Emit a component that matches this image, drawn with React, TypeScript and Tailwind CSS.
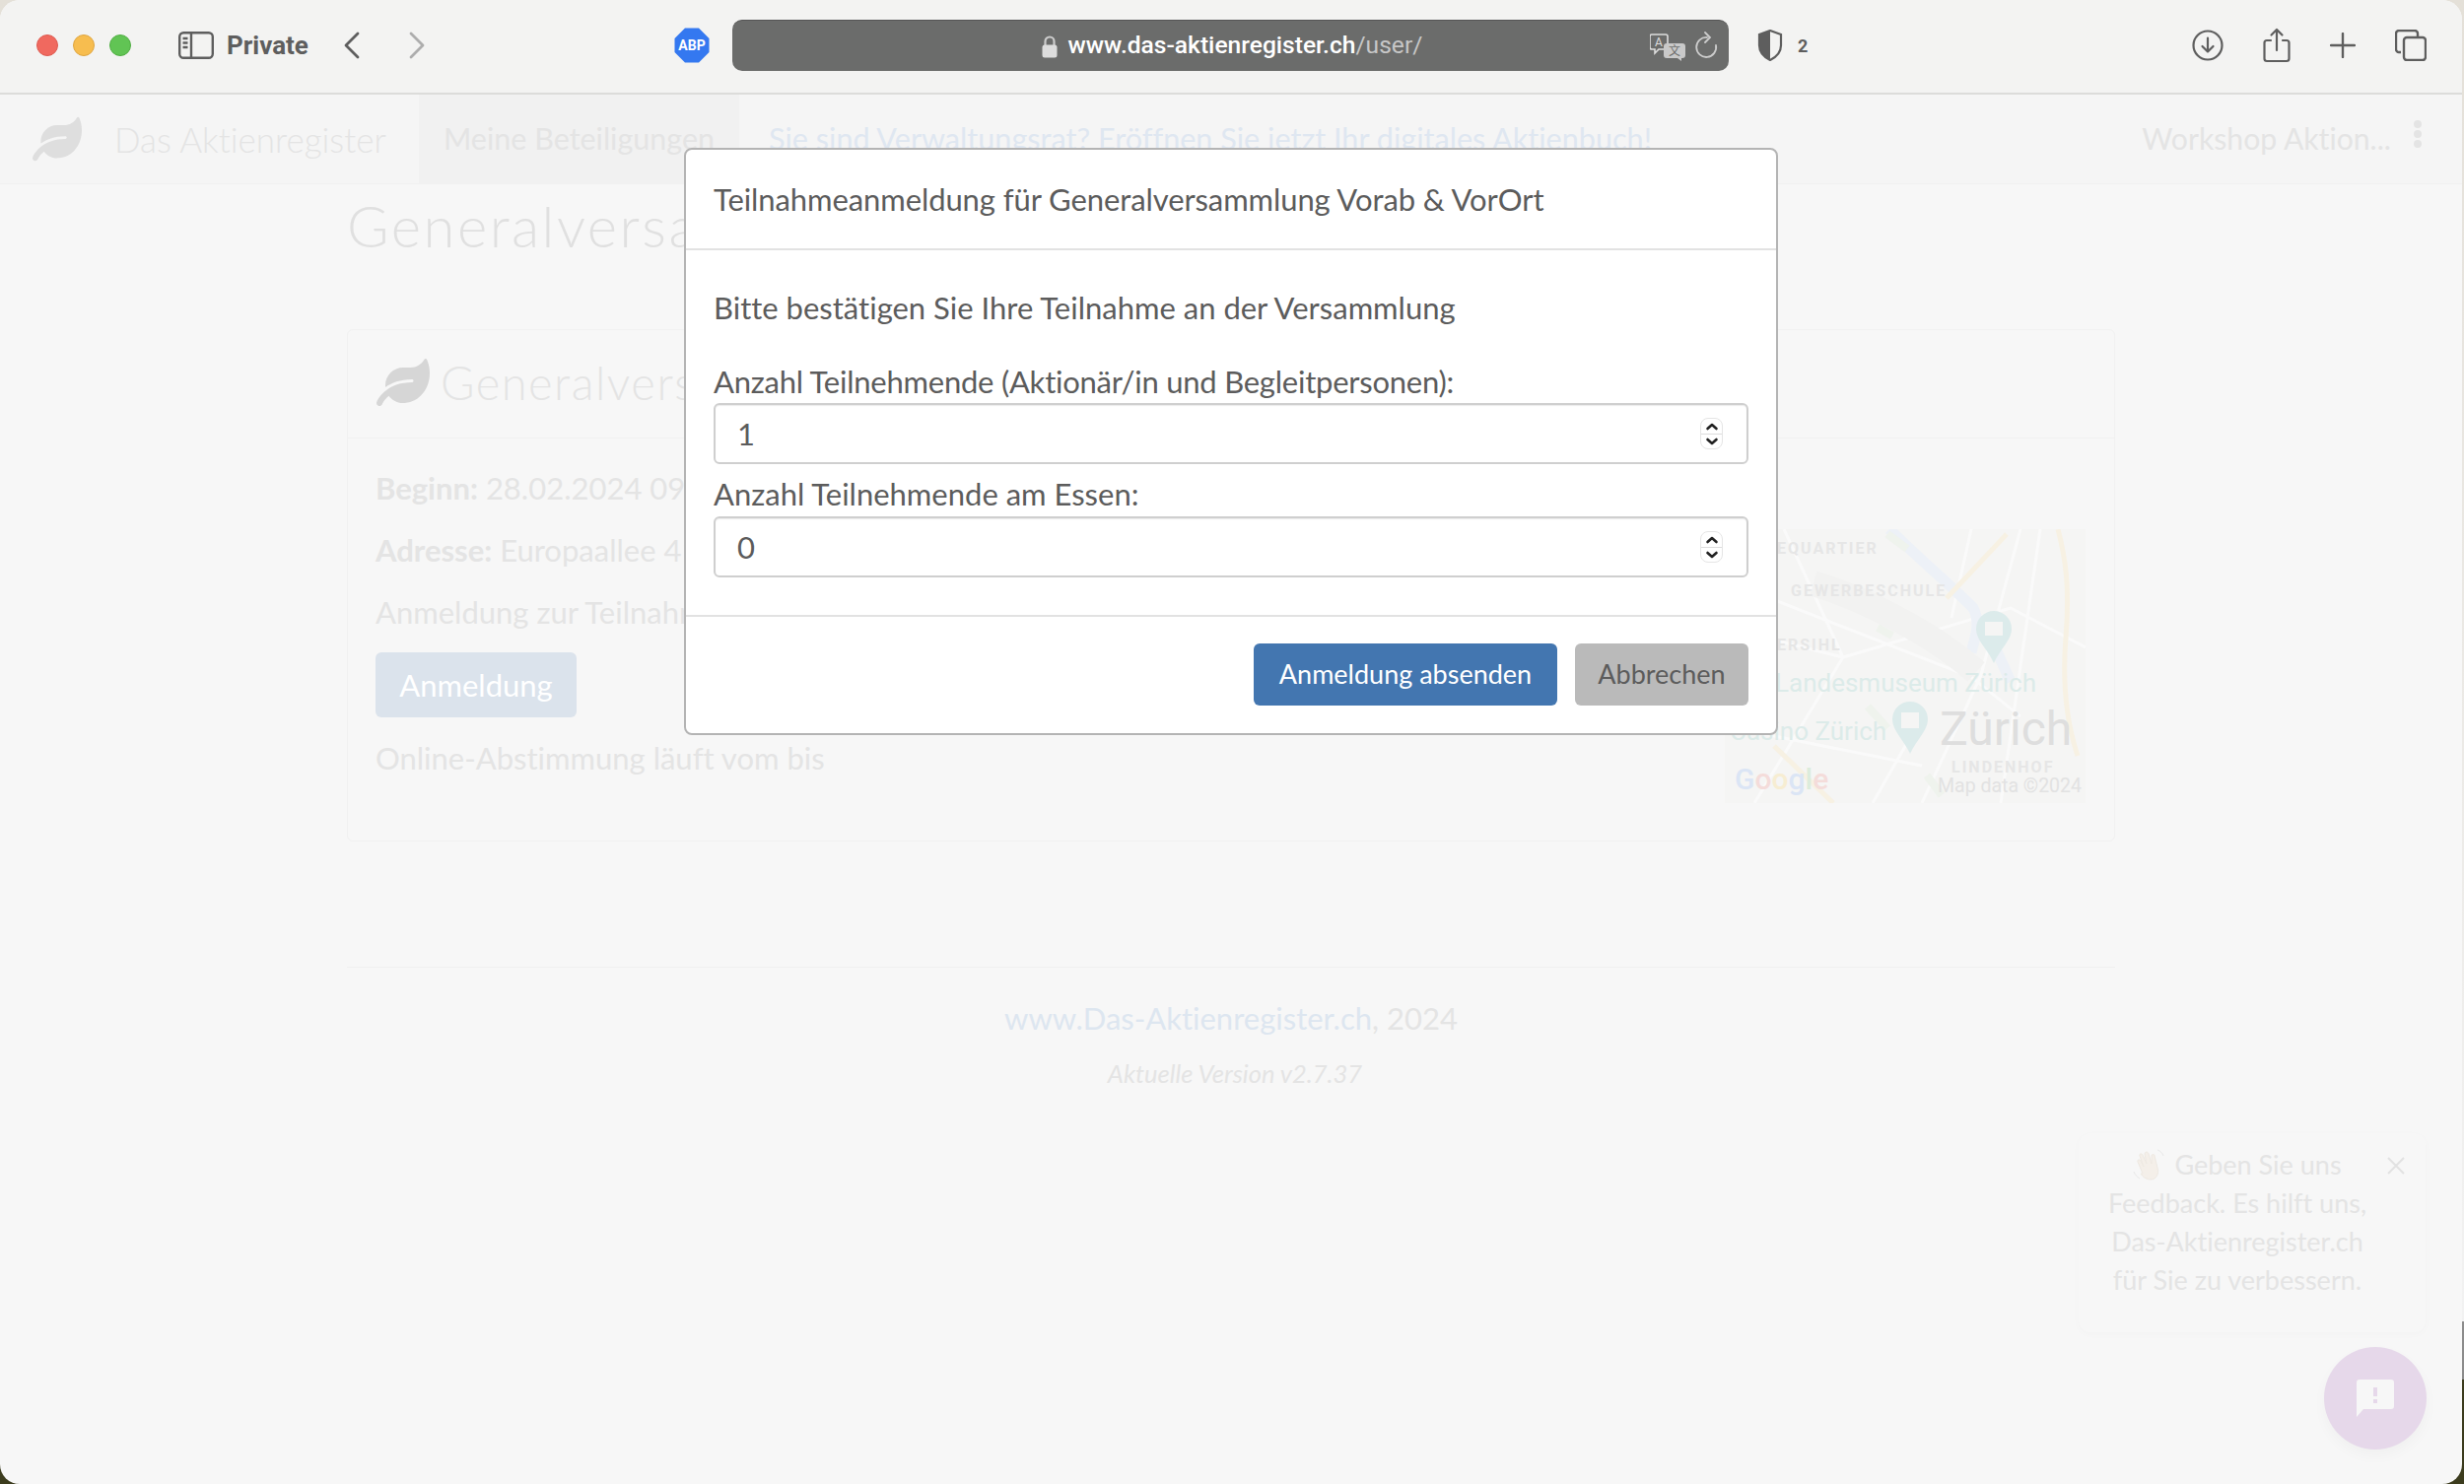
import { FaLeaf } from 'react-icons/fa'

const sans = "font-['Lato','Noto_Sans',sans-serif] [font-variant-ligatures:none]"

function Toolbar() {
  return (
    <div className="flex h-[96px] items-center border-b-2 border-[#dcdcda] bg-[#f3f3f2] pb-[2px] pl-[37px] pr-[36px] text-[#5e5e5e]">
      <div className="flex gap-[15px]">
        <span className="h-[22px] w-[22px] rounded-full border border-[#de5a50] bg-[#f0695f]" />
        <span className="h-[22px] w-[22px] rounded-full border border-[#dfa53f] bg-[#f7bd4f]" />
        <span className="h-[22px] w-[22px] rounded-full border border-[#4fae42] bg-[#61c454]" />
      </div>
      <svg className="ml-[48px]" width="36" height="28" viewBox="0 0 36 28" fill="none" stroke="#5e5e5e" strokeWidth="2.4">
        <rect x="1.2" y="1.2" width="33.6" height="25.6" rx="4" />
        <path d="M13 1.2v25.6M4.5 7h5M4.5 11.5h5M4.5 16h5" />
      </svg>
      <span className="ml-[13px] w-[84px] font-['Roboto',sans-serif] text-[26px] font-bold">Private</span>
      <svg className="ml-[34px]" width="18" height="28" viewBox="0 0 18 28" fill="none" stroke="#5e5e5e" strokeWidth="2.8" strokeLinecap="round" strokeLinejoin="round">
        <path d="M15 2 3 14l12 12" />
      </svg>
      <svg className="ml-[48px]" width="18" height="28" viewBox="0 0 18 28" fill="none" stroke="#adadad" strokeWidth="2.8" strokeLinecap="round" strokeLinejoin="round">
        <path d="m3 2 12 12L3 26" />
      </svg>
      <svg className="ml-[252px]" width="36" height="36" viewBox="0 0 36 36">
        <path d="M11 .5h14L35.5 11v14L25 35.5H11L.5 25V11z" fill="#3478f0" />
        <text x="18" y="23" textAnchor="middle" fontFamily="Roboto" fontSize="14" fontWeight="700" fill="#fff">ABP</text>
      </svg>
      <div className="relative ml-[23px] flex h-[52px] w-[1011px] items-center justify-center rounded-[10px] border-t border-[#555] bg-[#6b6c6b] pl-[2px] font-['Roboto',sans-serif] text-[24.6px] text-white">
        <svg className="mr-[10px]" width="18" height="24" viewBox="0 0 18 24">
          <path d="M4.5 11V7a4.5 4.5 0 0 1 9 0v4" fill="none" stroke="#ccc" strokeWidth="2.2" />
          <rect x="1.5" y="10.5" width="15" height="13" rx="2.5" fill="#ddd" />
        </svg>
        <span className="font-medium">www.das-aktienregister.ch</span>
        <span className="text-[#c7c7c7]">/user/</span>
        <svg className="absolute right-[44px] top-[13px]" width="36" height="28" viewBox="0 0 36 28">
          <path d="M2 1h14a2 2 0 0 1 2 2v11a2 2 0 0 1-2 2H9l-4 4v-4H2a2 2 0 0 1-2-2V3a2 2 0 0 1 2-2z" fill="none" stroke="#ddd" strokeWidth="1.6" />
          <text x="9" y="13" textAnchor="middle" fontFamily="Roboto" fontSize="12" fill="#ddd">A</text>
          <path d="M17 10h16a3 3 0 0 1 3 3v9a3 3 0 0 1-3 3h-1v3l-4-3H17a3 3 0 0 1-3-3v-9a3 3 0 0 1 3-3z" fill="#c9c9c9" />
          <text x="25" y="22" textAnchor="middle" fontFamily="Noto Sans CJK SC" fontSize="12" fill="#6b6c6b">文</text>
        </svg>
        <svg className="absolute right-[11px] top-[11px]" width="24" height="30" viewBox="0 0 24 30" fill="none" stroke="#ccc" strokeWidth="1.8" strokeLinecap="round">
          <path d="M13 6a10 10 0 1 0 9 8" />
          <path d="m11 1 5 5-5 5" />
        </svg>
      </div>
      <svg className="ml-[29px]" width="26" height="32" viewBox="0 0 26 32">
        <path d="M13 1 2 5v11c0 7 5 12 11 15 6-3 11-8 11-15V5z" fill="none" stroke="#5e5e5e" strokeWidth="2.2" />
        <path d="M13 1 2 5v11c0 7 5 12 11 15z" fill="#5e5e5e" />
      </svg>
      <span className="ml-[15px] font-['Roboto',sans-serif] text-[18px] font-bold">2</span>
      <div className="ml-auto flex items-center gap-[40px]">
        <svg width="32" height="32" viewBox="0 0 32 32" fill="none" stroke="#5e5e5e" strokeWidth="2.2" strokeLinecap="round" strokeLinejoin="round">
          <circle cx="16" cy="16" r="14.5" />
          <path d="M16 8.5v14M10.5 17l5.5 5.5 5.500-5.500" />
        </svg>
        <svg width="28" height="36" viewBox="0 0 28 36" fill="none" stroke="#5e5e5e" strokeWidth="2.2" strokeLinecap="round" strokeLinejoin="round">
          <path d="M8 13H4a2.5 2.5 0 0 0-2.5 2.5v16A2.5 2.5 0 0 0 4 34h20a2.5 2.5 0 0 0 2.5-2.5v-16A2.5 2.5 0 0 0 24 13h-4M14 23V2M8.5 7.5 14 2l5.5 5.5" />
        </svg>
        <svg width="26" height="26" viewBox="0 0 26 26" fill="none" stroke="#5e5e5e" strokeWidth="2.4" strokeLinecap="round">
          <path d="M13 1v24M1 13h24" />
        </svg>
        <svg width="32" height="32" viewBox="0 0 32 32" fill="none" stroke="#5e5e5e" strokeWidth="2.4">
          <path d="M6 23H4a3 3 0 0 1-3-3V4a3 3 0 0 1 3-3h16a3 3 0 0 1 3 3v4" />
          <rect x="9" y="8" width="22" height="23" rx="3" />
        </svg>
      </div>
    </div>
  )
}

function Nav() {
  return (
    <div className="flex h-[91px] items-center border-b border-[#f1f1f1] bg-[#f5f5f5] text-[#e4e4e4]">
      <FaLeaf className="ml-[33px] text-[#dedede]" size={50} />
      <span className="ml-[33px] w-[309px] text-[35px] font-light">Das Aktienregister</span>
      <span className="flex h-full w-[325px] items-center justify-center bg-[#f1f1f1] text-[30.5px]">Meine Beteiligungen</span>
      <span className="ml-[30px] text-[30.6px] text-[#dfe7f1]">Sie sind Verwaltungsrat? Eröffnen Sie jetzt Ihr digitales Aktienbuch!</span>
      <span className="ml-auto text-[30.2px]">Workshop Aktion...</span>
      <span className="mb-[10px] ml-[23px] mr-[41px] flex flex-col gap-[2px]">
        <span className="h-[8px] w-[8px] rounded-full bg-[#e4e4e4]" />
        <span className="h-[8px] w-[8px] rounded-full bg-[#e4e4e4]" />
        <span className="h-[8px] w-[8px] rounded-full bg-[#e4e4e4]" />
      </span>
    </div>
  )
}

function MapBox() {
  return (
    <div className="relative h-[278px] w-[366px] overflow-hidden bg-[#f5f5f4] font-['Roboto',sans-serif]">
      <svg className="absolute inset-0" width="366" height="278" viewBox="0 0 366 278" fill="none">
        <path d="M20 60 250 150 300 190M60 0 120 130 30 278M200 278l60-130 40-148M0 200l200 40M120 130l170-50 76 40M0 100l120 30M150 278l40-70M250 0l-20 90M320 0l-40 278" stroke="#fafafa" strokeWidth="3" />
        <path d="M167 0c30 30 60 55 85 80 8 15 2 30-2 45M272 115l18 40" stroke="#edf1f7" strokeWidth="11" />
        <path d="M225 70 286 5M338 0c8 30 12 60 8 110-4 50 2 90 12 120" stroke="#f7f1e3" strokeWidth="5" />
        <path d="M50 220l60 58" stroke="#f7f1e3" strokeWidth="5" />
        <path d="M165 5l20 15M155 100l15 8M145 180l20 22M205 250l15 20" stroke="#eff3ed" strokeWidth="8" />
        <path d="M90 55c50 15 120 50 165 90" stroke="#f2f2f1" strokeWidth="26" />
        <path d="M255 101a18 18 0 0 1 36 0c0 12-12 21-18 35-6-14-18-23-18-35z" fill="#dcebeb" />
        <path d="M170 193a18 18 0 0 1 36 0c0 12-12 21-18 35-6-14-18-23-18-35z" fill="#dcebeb" />
        <rect x="264" y="94" width="18" height="14" fill="#f5f5f4" />
        <rect x="179" y="186" width="18" height="16" fill="#f5f5f4" />
      </svg>
      <span className="absolute left-[53px] top-[10px] text-[16px] font-bold leading-[20px] tracking-[2px] text-[#e6e6e6]">EQUARTIER</span>
      <span className="absolute left-[67px] top-[53px] text-[16px] font-bold leading-[20px] tracking-[2px] text-[#e6e6e6]">GEWERBESCHULE</span>
      <span className="absolute left-[53px] top-[108px] text-[16px] font-bold leading-[20px] tracking-[2px] text-[#e6e6e6]">ERSIHL</span>
      <span className="absolute left-[51px] top-[138px] text-[26px] leading-[36px] text-[#dcebe9]">Landesmuseum Zürich</span>
      <span className="absolute left-[5px] top-[187px] text-[26px] leading-[36px] text-[#dcebe9]">Casino Zürich</span>
      <span className="absolute left-[218px] top-[175px] text-[48px] leading-[56px] text-[#dedede]">Zürich</span>
      <span className="absolute left-[230px] top-[232px] text-[16px] font-bold leading-[20px] tracking-[2px] text-[#e6e6e6]">LINDENHOF</span>
      <span className="absolute left-[216px] top-[249px] text-[19.5px] leading-[24px] text-[#e2e2e2]">Map data ©2024</span>
      <span className="absolute left-[10px] top-[236px] text-[30px] font-medium leading-[36px]">
        <span className="text-[#dbe5f5]">G</span><span className="text-[#f4dcda]">o</span><span className="text-[#f7edd2]">o</span><span className="text-[#dbe5f5]">g</span><span className="text-[#dcecdc]">l</span><span className="text-[#f4dcda]">e</span>
      </span>
    </div>
  )
}

function Main() {
  return (
    <div className="ml-[352px] w-[1794px] text-[#e4e4e4]">
      <h1 className="mt-[7px] text-[58px] font-light leading-[70px] tracking-[2.5px] text-[#e0e0e0]">Generalversammlung</h1>
      <div className="mt-[70px] h-[520px] rounded-[6px] border border-[#f1f1f1]">
        <div className="flex h-[110px] items-center gap-[11px] border-b border-[#f1f1f1] pb-[3px] pl-[29px]">
          <FaLeaf className="text-[#d6d6d6]" size={54} />
          <span className="text-[47px] font-light tracking-[1.5px]">Generalversammlung</span>
        </div>
        <div className="flex justify-between pl-[28px] pr-[29px]">
          <div className="pt-[30px] text-[31px] leading-[40px]">
            <p><b className="font-bold">Beginn:</b> 28.02.2024 09:00</p>
            <p className="mt-[23px]"><b className="font-bold">Adresse:</b> Europaallee 41, 8004 Zürich</p>
            <p className="mt-[23px]">Anmeldung zur Teilnahme</p>
            <div className="mt-[21px] flex h-[66px] w-[204px] items-center justify-center rounded-[6px] bg-[#dbe3ec] text-white">Anmeldung</div>
            <p className="mt-[21px]">Online-Abstimmung läuft vom bis</p>
          </div>
          <div className="pt-[92px]">
            <MapBox />
          </div>
        </div>
      </div>
      <div className="mt-[127px] border-t border-[#f0f0f0] pt-[32px] text-center">
        <p className="text-[31px] leading-[38px]"><span className="text-[#dde6f0]">www.Das-Aktienregister.ch</span>, 2024</p>
        <p className="ml-[8px] mt-[18px] text-[25.5px] italic leading-[38px]">Aktuelle Version v2.7.37</p>
      </div>
    </div>
  )
}

function Feedback() {
  return (
    <>
      <div className="absolute left-[2109px] top-[1150px] h-[202px] w-[352px] rounded-[12px] bg-[#f7f7f7] pt-[12px] text-center text-[27px] leading-[39px] text-[#e4e4e4] shadow-[0_2px_8px_rgba(0,0,0,0.02)]">
        <div className="w-[322px]">
          <div className="flex items-center justify-center gap-[8px]">
            <svg width="34" height="34" viewBox="0 0 34 34" fill="#f4efe9" stroke="#eee9e2" strokeWidth="1">
              <path d="M10 26 5 14c-1-2 2-3 3-1l3 6-4-11c-1-2 2-3 3-1l4 9-2-10c0-2 3-3 4 0l3 10 0-8c0-2 3-2 3 0l3 12c2 6-1 12-7 12-5 0-8-3-10-6z" />
              <path d="M25 2c3 1 5 3 6 6M1 24c1 3 3 5 6 7" fill="none" stroke="#e8e8e8" />
            </svg>
            <span>Geben Sie uns</span>
          </div>
          <div>Feedback. Es hilft uns,</div>
          <div>Das-Aktienregister.ch</div>
          <div>für Sie zu verbessern.</div>
        </div>
        <svg className="absolute left-[313px] top-[24px]" width="18" height="18" viewBox="0 0 18 18" stroke="#e2e2e2" strokeWidth="2">
          <path d="m1 1 16 16M17 1 1 17" />
        </svg>
      </div>
      <div className="absolute left-[2358px] top-[1367px] flex h-[104px] w-[104px] items-center justify-center rounded-full bg-[#e6d8ea] shadow-[0_6px_14px_rgba(0,0,0,0.03)]">
        <svg width="38" height="38" viewBox="0 0 38 38">
          <path d="M3 0h32a3 3 0 0 1 3 3v24a3 3 0 0 1-3 3H7l-7 8V3a3 3 0 0 1 3-3z" fill="#f7f7f7" />
          <rect x="17" y="8" width="4" height="9" fill="#e6d8ea" />
          <rect x="17" y="20" width="4" height="4" fill="#e6d8ea" />
        </svg>
      </div>
    </>
  )
}

function NumberField({ value }: { value: string }) {
  return (
    <div className="flex h-[62px] items-center justify-between rounded-[6px] border-2 border-[#cfcfcf] pl-[22px] pr-[24px] shadow-[inset_0_1px_1px_rgba(0,0,0,0.08)]">
      <span>{value}</span>
      <div className="flex h-[32px] w-[23px] flex-col items-center justify-center rounded-[8px] border border-[#e5e5e5]">
        <svg width="14" height="14" viewBox="0 0 14 14" fill="none" stroke="#222" strokeWidth="2.6" strokeLinecap="round" strokeLinejoin="round">
          <path d="m2.5 9 4.5-4 4.5 4" />
        </svg>
        <div className="h-px w-full bg-[#ddd]" />
        <svg width="14" height="14" viewBox="0 0 14 14" fill="none" stroke="#222" strokeWidth="2.6" strokeLinecap="round" strokeLinejoin="round">
          <path d="m2.5 5 4.5 4 4.5-4" />
        </svg>
      </div>
    </div>
  )
}

function Modal() {
  return (
    <div className="absolute left-[694px] top-[150px] h-[596px] w-[1110px] rounded-[8px] border-2 border-[#b4b4b4] bg-white text-[31px] text-[#5c5c5c]">
      <div className="flex h-[102px] items-center border-b-2 border-[#e2e2e2] pl-[28px] tracking-[-0.09px]">Teilnahmeanmeldung für Generalversammlung Vorab &amp; VorOrt</div>
      <div className="h-[372px] border-b-2 border-[#e2e2e2] px-[28px] pt-[38px]">
        <p className="leading-[40px]">Bitte bestätigen Sie Ihre Teilnahme an der Versammlung</p>
        <p className="mt-[35px] leading-[40px] tracking-[-0.24px]">Anzahl Teilnehmende (Aktionär/in und Begleitpersonen):</p>
        <div className="mt-[2px]"><NumberField value="1" /></div>
        <p className="mt-[10px] leading-[40px]">Anzahl Teilnehmende am Essen:</p>
        <div className="mt-[3px]"><NumberField value="0" /></div>
      </div>
      <div className="flex justify-end gap-[18px] px-[28px] pt-[27px] text-[27px]">
        <div className="flex h-[63px] w-[308px] items-center justify-center rounded-[6px] bg-[#4376b0] text-white">Anmeldung absenden</div>
        <div className="flex h-[63px] w-[176px] items-center justify-center rounded-[6px] bg-[#bababa]">Abbrechen</div>
      </div>
    </div>
  )
}

export default function App() {
  return (
    <div className={`h-[1506px] w-[2500px] overflow-hidden bg-[linear-gradient(180deg,#e4e0d8_0,#f2f2f2_1341px,#8c8c8c_1341px,#8c8c8c_1400px,#3c3c1e_1400px)] ${sans}`}>
      <div className="relative h-[1506px] w-[2498px] overflow-hidden rounded-[20px] bg-[#f7f7f7]">
        <Toolbar />
        <Nav />
        <Main />
        <Feedback />
        <Modal />
      </div>
    </div>
  )
}
